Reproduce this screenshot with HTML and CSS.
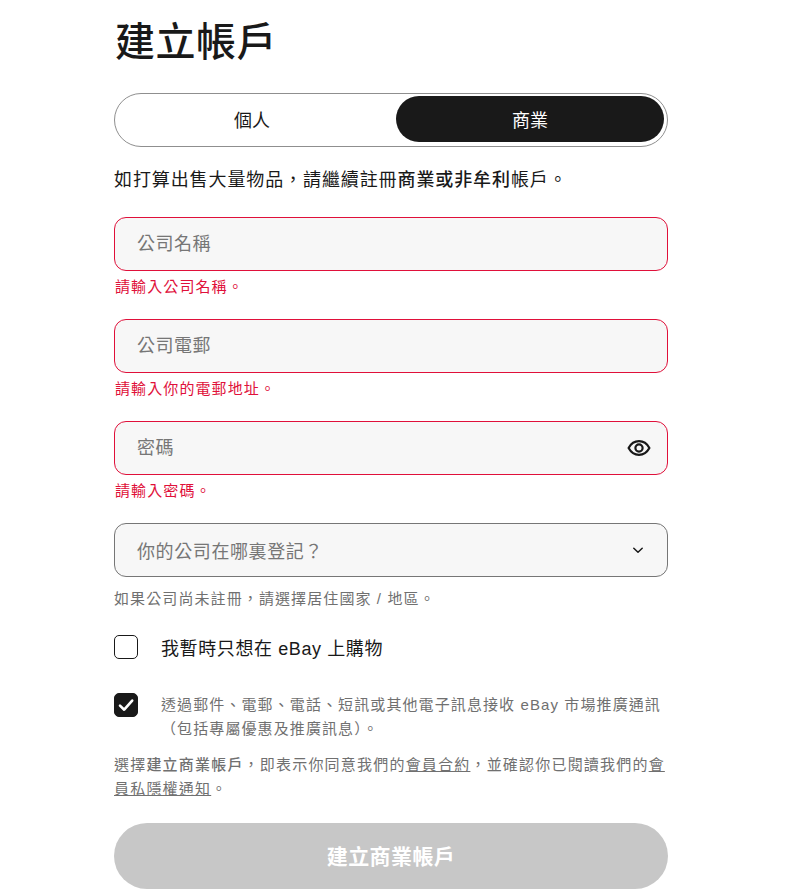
FILE: index.html
```html
<!DOCTYPE html>
<html lang="zh-Hant">
<head>
<meta charset="utf-8">
<title>建立帳戶</title>
<link rel="stylesheet" href="styles.css">
</head>
<body>
<main class="page">
  <h1 class="title">建立帳戶</h1>
  <div class="switch">
    <button class="tab" type="button">個人</button>
    <button class="tab tab-active" type="button">商業</button>
  </div>
  <p class="intro">如打算出售大量物品，請繼續註冊<strong>商業或非牟利</strong>帳戶。</p>

  <div class="field">
    <div class="box box-error"><span class="ph">公司名稱</span></div>
    <p class="error">請輸入公司名稱。</p>
  </div>
  <div class="field">
    <div class="box box-error"><span class="ph">公司電郵</span></div>
    <p class="error">請輸入你的電郵地址。</p>
  </div>
  <div class="field">
    <div class="box box-error">
      <span class="ph">密碼</span>
      <svg class="eye" viewBox="0 0 24 24" width="24" height="24" aria-hidden="true"><path d="M1.6 12C4 7.6 7.7 5.2 12 5.2S20 7.6 22.4 12C20 16.4 16.3 18.8 12 18.8S4 16.4 1.6 12Z" fill="none" stroke="#191919" stroke-width="2.2" stroke-linejoin="round"/><circle cx="12" cy="12" r="3.6" fill="none" stroke="#191919" stroke-width="2.2"/></svg>
    </div>
    <p class="error">請輸入密碼。</p>
  </div>
  <div class="field">
    <div class="box box-select">
      <span class="ph ph-select">你的公司在哪裏登記？</span>
      <svg class="chev" viewBox="0 0 12 12" width="12" height="12" aria-hidden="true"><path d="M1.8 4.2 6 8.2l4.2-4" fill="none" stroke="#191919" stroke-width="1.5" stroke-linecap="round" stroke-linejoin="round"/></svg>
    </div>
    <p class="hint">如果公司尚未註冊，請選擇居住國家 / 地區。</p>
  </div>

  <div class="check check-plain">
    <span class="cb"></span>
    <span class="check-label">我暫時只想在 eBay 上購物</span>
  </div>
  <div class="check check-marketing">
    <span class="cb cb-on"><svg viewBox="0 0 24 24" width="24" height="24" aria-hidden="true"><path d="M6 12.6l4.2 4.1L18.2 7.6" fill="none" stroke="#fff" stroke-width="2.6" stroke-linecap="round" stroke-linejoin="round"/></svg></span>
    <span class="check-small">透過郵件、電郵、電話、短訊或其他電子訊息接收 eBay 市場推廣通訊（包括專屬優惠及推廣訊息）。</span>
  </div>
  <p class="terms">選擇<strong>建立商業帳戶</strong>，即表示你同意我們的<a href="#">會員合約</a>，並確認你已閱讀我們的<a href="#">會員私隱權通知</a>。</p>
  <button class="submit" type="button">建立商業帳戶</button>
</main>
</body>
</html>
```
FILE: styles.css
```css
* { box-sizing: border-box; }
html, body { margin: 0; height: 896px; overflow: hidden; background: #fff; }
body { font-family: "Liberation Sans", "Noto Sans CJK TC", sans-serif; color: #191919; }
.page { width: 554px; margin-left: 114px; display: flex; flex-direction: column; }
.title { margin: 13px 0 0; font-size: 40px; line-height: 58px; font-weight: 500; letter-spacing: .5px; height: 58px; padding-left: 1px; }
.switch { margin-top: 22px; height: 54px; border: 1px solid #8f8f8f; border-radius: 27px; padding: 2px 3px 4px; display: flex; gap: 10px; }
.tab { flex: 1; border: 0; background: none; font: inherit; font-size: 18px; color: #191919; border-radius: 23px; padding: 0; }
.tab-active { background: #191919; color: #fff; }
.intro { margin: 20px 0 0; font-size: 18px; line-height: 26px; letter-spacing: .9px; }
.intro strong { font-weight: 500; }
.field { display: flex; flex-direction: column; }
.box { height: 54px; border-radius: 12px; background: #f7f7f7; border: 1px solid #8f8f8f; padding: 0 16px 0 22px; display: flex; align-items: center; justify-content: space-between; }
.box-error { border-color: #e0103a; }
.box-select { border-color: #767676; padding-right: 23px; }
.intro + .field { margin-top: 24px; }
.field + .field { margin-top: 14px; }
.ph { font-size: 18px; line-height: 24px; letter-spacing: .5px; color: #767676; }
.ph-select { margin: 3px 0 0; letter-spacing: .6px; }
.error, .hint { margin: 6px 0 0; font-size: 15px; line-height: 20px; letter-spacing: 1.1px; height: 28px; }
.error { color: #e0103a; padding-left: 1px; }
.hint { color: #707070; margin-top: 12px; height: 19px; }
.check { display: flex; align-items: flex-start; gap: 23px; }
.check-plain { margin-top: 27px; }
.check-marketing { margin-top: 32px; }
.cb { flex: none; width: 24px; height: 24px; border: 1px solid #191919; border-radius: 5px; background: #fff; display: block; }
.cb-on { background: #191919; }
.cb-on svg { display: block; margin: -1px; }
.check-label { font-size: 18px; line-height: 26px; letter-spacing: .6px; transform: translateY(1px); }
.check-small { font-size: 15px; line-height: 24px; letter-spacing: 1.1px; color: #707070; }
.terms { margin: 12px 0 0; font-size: 15px; line-height: 24px; letter-spacing: 1.2px; color: #707070; }
.terms strong { font-weight: 500; }
.terms a { color: #707070; text-decoration: underline; }
.submit { margin-top: 22px; height: 66px; border: 0; border-radius: 33px; background: #c7c7c7; color: #fff; font: inherit; font-size: 21px; font-weight: 700; letter-spacing: .4px; padding-bottom: 3px; }
```
